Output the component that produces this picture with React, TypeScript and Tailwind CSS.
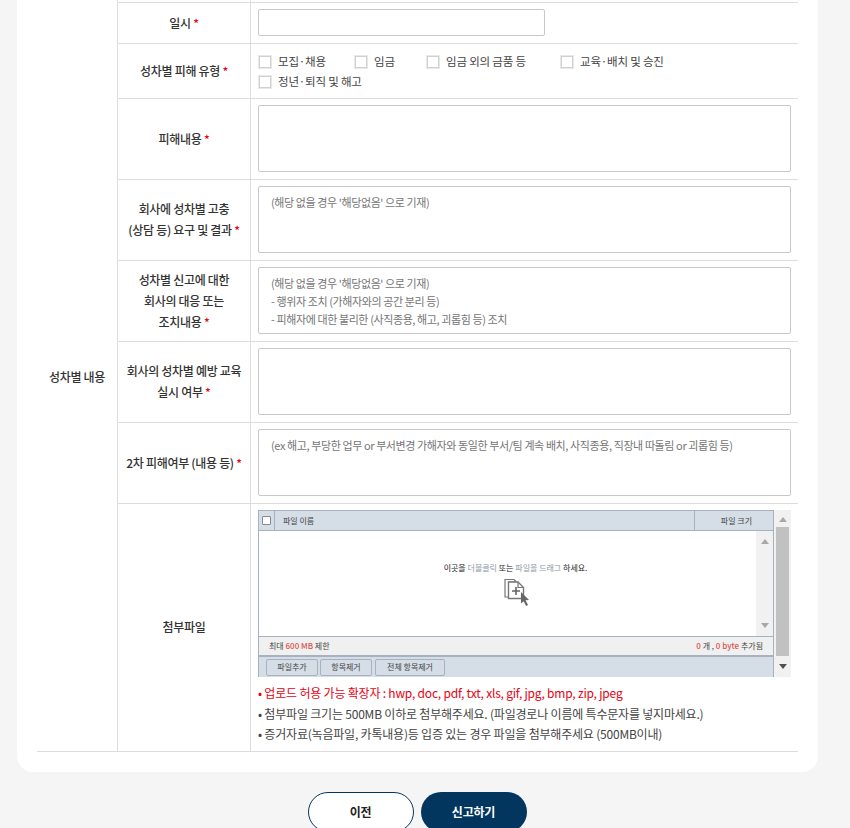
const FONT = "font-['Noto_Sans_CJK_KR','Noto_Sans',sans-serif]";

function Req() {
  return <span className="text-[#e60012]"> *</span>;
}

function Row({ h, label, children }: { h: string; label: React.ReactNode; children: React.ReactNode }) {
  return (
    <div className={`flex border-b border-[#dddddd] ${h}`}>
      <div className="w-[133px] shrink-0 border-r border-[#dddddd] flex items-center justify-center text-center text-[12px] leading-[21px] font-medium tracking-[-0.3px] text-[#333333] pb-[2px]">
        <div>{label}</div>
      </div>
      <div className="flex-1 min-w-0">{children}</div>
    </div>
  );
}

function Area({ lines }: { lines?: string[] }) {
  return (
    <div className="mx-[7px] mt-[6px] w-[533px] h-[67px] border border-[#c8c8c8] rounded-[2px] bg-white px-[12px] pt-[6px] text-[11px] leading-[18px] tracking-[-0.4px] text-[#757575]">
      {lines?.map((l) => <div key={l} className="whitespace-nowrap">{l}</div>)}
    </div>
  );
}

function Check({ label, className }: { label: string; className: string }) {
  return (
    <label className={`flex items-center gap-[7px] text-[11.5px] tracking-[-0.2px] text-[#444444] whitespace-nowrap ${className}`}>
      <span className="w-[12px] h-[12px] bg-white border border-[#d0d0d0] outline outline-1 outline-[#e8e8e8] shrink-0" />
      {label}
    </label>
  );
}

function Arrow({ up, color }: { up?: boolean; color: string }) {
  return (
    <svg width="8" height="5" viewBox="0 0 8 5">
      <path d={up ? "M4 0 L8 5 L0 5 Z" : "M0 0 L8 0 L4 5 Z"} fill={color} />
    </svg>
  );
}

function Uploader() {
  return (
    <div className="ml-[7px] mt-[6px] flex w-[533px] h-[167px]">
      <div className="w-[516px] h-full flex flex-col border-l border-t border-r border-[#a7b1bf] text-[8px] tracking-normal text-[#444444] bg-white">
        <div className="h-[20px] flex bg-[#d5dde6] border-b border-[#a7b1bf] leading-[20px]">
          <div className="w-[16px] border-r border-[#a7b1bf] flex items-center justify-center">
            <span className="w-[9px] h-[9px] bg-white border border-[#888888] rounded-[1px]" />
          </div>
          <div className="flex-1 pl-[8px]">파일 이름</div>
          <div className="w-[79px] border-l border-[#a7b1bf] text-right pr-[21px]">파일 크기</div>
        </div>
        <div className="h-[106px] flex border-b border-[#a7b1bf]">
          <div className="flex-1 flex flex-col items-center pt-[31px] pl-[16px]">
            <div className="leading-[12px] whitespace-nowrap text-[#222222]">
              이곳을 <span className="text-[#8a97a8]">더블클릭</span> 또는 <span className="text-[#8a97a8]">파일을 드래그</span> 하세요.
            </div>
            <svg className="mt-[4px] ml-[2px]" width="26" height="28" viewBox="0 0 26 28">
              <path d="M1 1.5 H10 L12 3.5 V4 H5 V19 H1 Z" fill="#fff" stroke="#777" strokeWidth="1.2" />
              <path d="M4.5 4 H14 L19.5 9.5 V20.5 H4.5 Z" fill="#fff" stroke="#777" strokeWidth="1.4" />
              <path d="M14 4 V9.5 H19.5" fill="none" stroke="#777" strokeWidth="1.2" />
              <path d="M12 9 V17 M8 13 H16" stroke="#666" strokeWidth="1.6" />
              <path d="M17 14 L25 22 L21.5 22.3 L24 27 L22 28 L19.7 23.3 L17 25.5 Z" fill="#666" />
            </svg>
          </div>
          <div className="w-[17px] bg-[#f1f1f1] flex flex-col items-center justify-between py-[8px]">
            <Arrow up color="#a8a8a8" />
            <Arrow color="#a8a8a8" />
          </div>
        </div>
        <div className="h-[18px] flex items-center justify-between bg-[#f0f0f0] px-[10px]">
          <span>최대 <b className="text-[#d9534f] font-medium">600 MB</b> 제한</span>
          <span><b className="text-[#d9534f] font-medium">0</b> 개 , <b className="text-[#d9534f] font-medium">0 byte</b> 추가됨</span>
        </div>
        <div className="flex-1 bg-[#d5dde6] border-t-2 border-[#a7b1bf] flex items-center gap-[2px] px-[7px]">
          <button className="w-[52px] h-[17px] border border-[#a7b1bf] rounded-[2px] text-[8px]">파일추가</button>
          <button className="w-[52px] h-[17px] border border-[#a7b1bf] rounded-[2px] text-[8px]">항목제거</button>
          <button className="w-[70px] h-[17px] ml-[1px] border border-[#a7b1bf] rounded-[2px] text-[8px]">전체 항목제거</button>
        </div>
      </div>
      <div className="w-[17px] h-full bg-[#f1f1f1] flex flex-col items-center pt-[7px] pb-[8px]">
        <Arrow up color="#a8a8a8" />
        <div className="w-[13px] h-[131px] bg-[#c1c1c1] mt-[5px] mb-[8px]" />
        <Arrow color="#505050" />
      </div>
    </div>
  );
}

export default function App() {
  return (
    <div className={`h-[828px] overflow-hidden bg-[#f5f5f5] ${FONT} tracking-[-0.2px]`}>
      <div className="ml-[17px] w-[801px] h-[772px] bg-white rounded-b-[16px] px-[20px]">
        <div className="flex border-b border-[#dddddd]">
          <div className="w-[81px] shrink-0 border-r border-[#dddddd] flex items-center justify-center text-[12px] font-medium tracking-[-0.3px] text-[#333333] pt-[2px]">
            성차별 내용
          </div>
          <div className="flex-1 min-w-0">
            <div className="h-[3px] border-b border-[#dddddd] flex">
              <div className="w-[133px] border-r border-[#dddddd]" />
            </div>
            <Row h="h-[41px]" label={<>일시<Req /></>}>
              <div className="ml-[7px] mt-[6px] w-[287px] h-[27px] border border-[#c8c8c8] rounded-[2px] bg-white" />
            </Row>
            <Row h="h-[55px]" label={<>성차별 피해 유형<Req /></>}>
              <div className="ml-[8px] pt-[9px] flex flex-wrap">
                <Check label="모집·채용" className="w-[96px] h-[17px]" />
                <Check label="임금" className="w-[72px] h-[17px]" />
                <Check label="임금 외의 금품 등" className="w-[134px] h-[17px]" />
                <Check label="교육·배치 및 승진" className="w-[200px] h-[17px]" />
                <Check label="정년·퇴직 및 해고" className="w-[200px] h-[17px] mt-[3px]" />
              </div>
            </Row>
            <Row h="h-[81px]" label={<>피해내용<Req /></>}>
              <Area />
            </Row>
            <Row h="h-[81px]" label={<>회사에 성차별 고충<br />(상담 등) 요구 및 결과<Req /></>}>
              <Area lines={["(해당 없을 경우 '해당없음' 으로 기재)"]} />
            </Row>
            <Row h="h-[81px]" label={<>성차별 신고에 대한<br />회사의 대응 또는<br />조치내용<Req /></>}>
              <Area lines={["(해당 없을 경우 '해당없음' 으로 기재)", "- 행위자 조치 (가해자와의 공간 분리 등)", "- 피해자에 대한 불리한 (사직종용, 해고, 괴롭힘 등) 조치"]} />
            </Row>
            <Row h="h-[81px]" label={<>회사의 성차별 예방 교육<br />실시 여부<Req /></>}>
              <Area />
            </Row>
            <Row h="h-[81px]" label={<>2차 피해여부 (내용 등)<Req /></>}>
              <Area lines={["(ex 해고, 부당한 업무 or 부서변경 가해자와 동일한 부서/팀 계속 배치, 사직종용, 직장내 따돌림 or 괴롭힘 등)"]} />
            </Row>
            <div className="flex h-[247px]">
              <div className="w-[133px] shrink-0 border-r border-[#dddddd] flex items-center justify-center text-[12px] font-medium tracking-[-0.3px] text-[#333333] pb-[2px]">
                첨부파일
              </div>
              <div className="flex-1 min-w-0">
                <Uploader />
                <ul className="ml-[7px] mt-[6px] text-[12px] leading-[20.5px] text-[#444444] whitespace-nowrap">
                  <li className="text-[#e60012]">• 업로드 허용 가능 확장자 : hwp, doc, pdf, txt, xls, gif, jpg, bmp, zip, jpeg</li>
                  <li>• 첨부파일 크기는 500MB 이하로 첨부해주세요. (파일경로나 이름에 특수문자를 넣지마세요.)</li>
                  <li>• 증거자료(녹음파일, 카톡내용)등 입증 있는 경우 파일을 첨부해주세요 (500MB이내)</li>
                </ul>
              </div>
            </div>
          </div>
        </div>
      </div>
      <div className="mt-[20px] flex justify-center gap-[7px] pr-[16px]">
        <button className="w-[106px] h-[40px] rounded-[20px] bg-white border border-[#03365f] text-[12px] font-bold text-[#222222]">이전</button>
        <button className="w-[106px] h-[40px] rounded-[20px] bg-[#03365f] text-[12px] font-bold text-white">신고하기</button>
      </div>
    </div>
  );
}
